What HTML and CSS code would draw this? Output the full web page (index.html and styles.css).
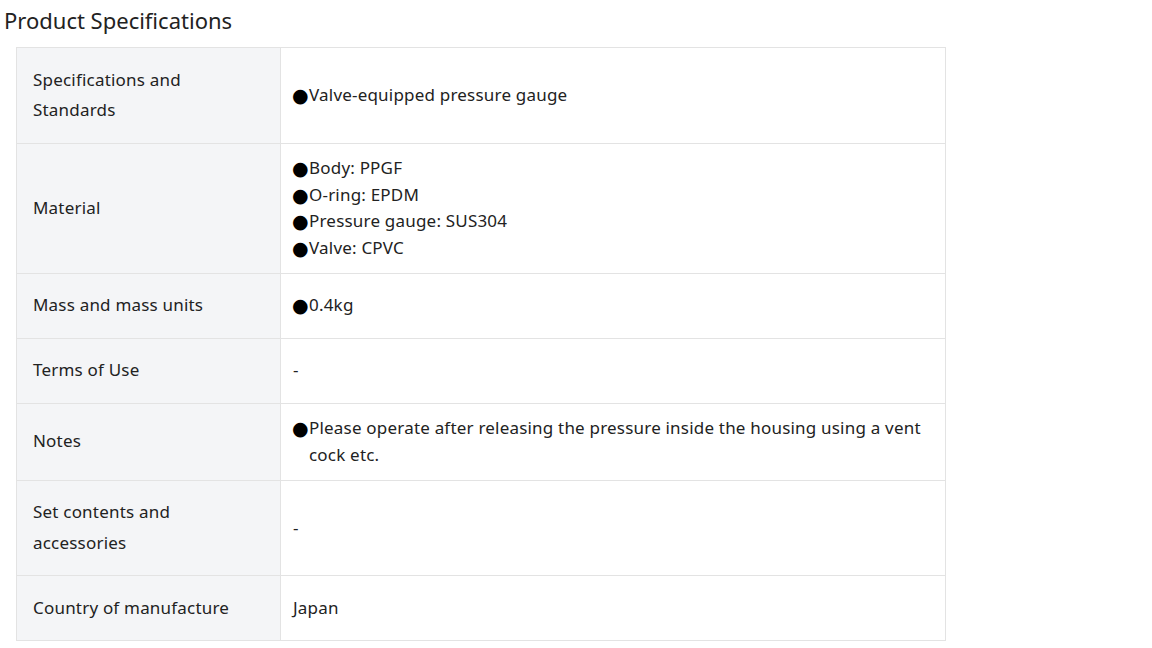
FILE: index.html
```html
<!DOCTYPE html>
<html lang="en">
<head>
<meta charset="utf-8">
<title>Product Specifications</title>
<link rel="stylesheet" href="styles.css">
</head>
<body>
<h2 class="title">Product Specifications</h2>
<table class="spec">
  <tr>
    <th>Specifications and Standards</th>
    <td><div class="item"><span class="dot">●</span><span>Valve-equipped pressure gauge</span></div></td>
  </tr>
  <tr>
    <th>Material</th>
    <td>
      <div class="item"><span class="dot">●</span><span>Body: PPGF</span></div>
      <div class="item"><span class="dot">●</span><span>O-ring: EPDM</span></div>
      <div class="item"><span class="dot">●</span><span>Pressure gauge: SUS304</span></div>
      <div class="item"><span class="dot">●</span><span>Valve: CPVC</span></div>
    </td>
  </tr>
  <tr>
    <th>Mass and mass units</th>
    <td><div class="item"><span class="dot">●</span><span>0.4kg</span></div></td>
  </tr>
  <tr>
    <th>Terms of Use</th>
    <td>-</td>
  </tr>
  <tr>
    <th>Notes</th>
    <td><div class="item"><span class="dot">●</span><span>Please operate after releasing the pressure inside the housing using a vent cock etc.</span></div></td>
  </tr>
  <tr>
    <th>Set contents and accessories</th>
    <td>-</td>
  </tr>
  <tr>
    <th>Country of manufacture</th>
    <td>Japan</td>
  </tr>
</table>
</body>
</html>
```
FILE: styles.css
```css
html, body {
  margin: 0;
  padding: 0;
  background: #ffffff;
}
body {
  padding: 4px 4px;
  font-family: "Noto Sans", sans-serif;
  color: #222;
}
.title {
  margin: 0 0 11px 0;
  font-size: 22px;
  font-weight: normal;
  line-height: 32px;
  color: #222;
}
.spec {
  margin-left: 12px;
  width: 930px;
  border-collapse: collapse;
  font-size: 17px;
  letter-spacing: 0.2px;
}
.spec th,
.spec td {
  border: 1px solid #e3e3e3;
  vertical-align: middle;
  text-align: left;
  font-weight: normal;
}
.spec th {
  width: 231px;
  background: #f4f5f7;
  padding: 16.75px 16px;
  line-height: 30.5px;
}
.spec td {
  padding: 11.5px 12px;
  line-height: 26.5px;
}
.item {
  display: flex;
}
.dot {
  flex: none;
  color: #000;
  font-family: "DejaVu Sans", sans-serif;
  font-size: 19px;
  line-height: 26.5px;
  letter-spacing: 0;
  width: 16px;
  overflow: visible;
  margin-left: -1px;
  margin-right: 1px;
}
```
